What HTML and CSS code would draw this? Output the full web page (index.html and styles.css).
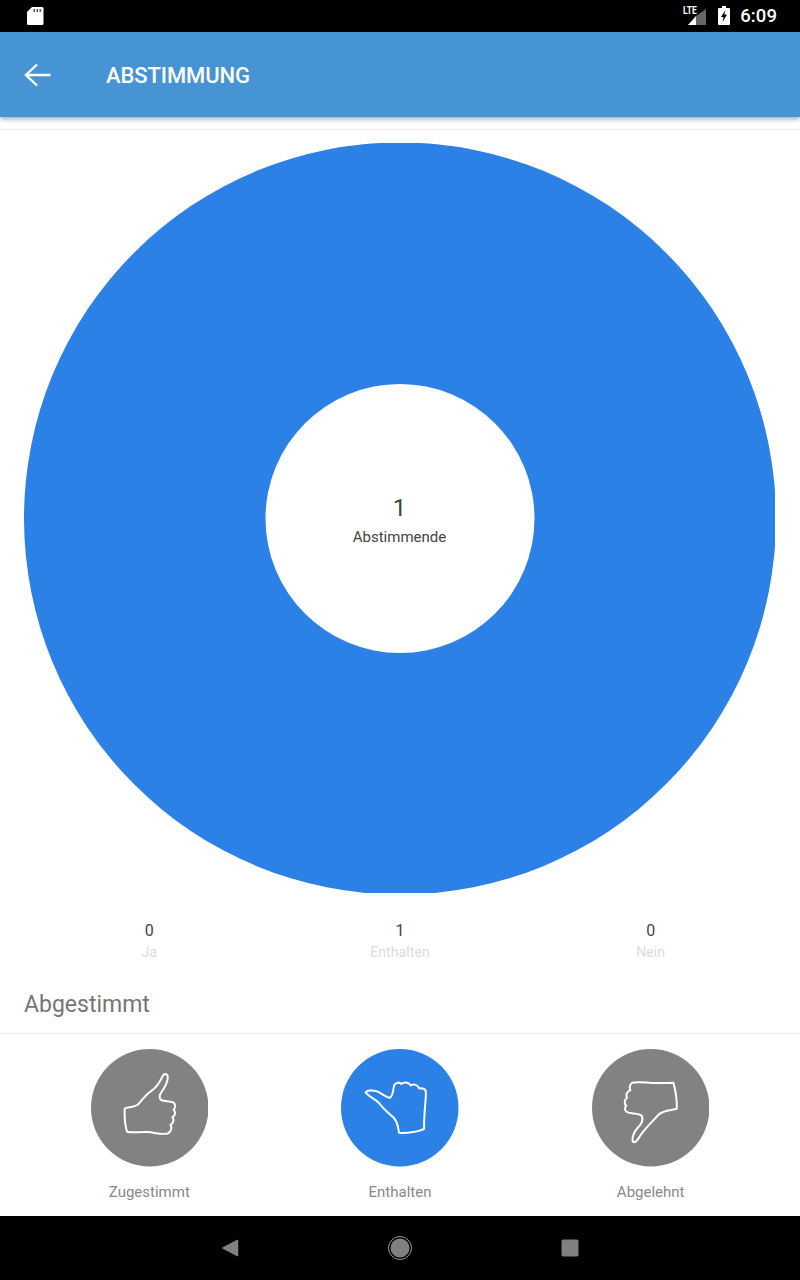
FILE: index.html
```html
<!DOCTYPE html>
<html lang="de">
<head>
<meta charset="utf-8">
<title>Abstimmung</title>
<link rel="stylesheet" href="styles.css">
</head>
<body>

<div class="statusbar">
  <svg class="sdcard" width="18" height="20" viewBox="0 0 18 20">
    <path d="M6 1h10a1.500 1.500 0 0 1 1.500 1.500v15a1.500 1.500 0 0 1-1.500 1.500H2.500A1.500 1.500 0 0 1 1 17.500V6z" fill="#fff"/>
    <path d="M7.500 3h1.500v3H7.500zM10.500 3H12v3h-1.500zM13.500 3H15v3h-1.500z" fill="#555"/>
  </svg>
  <div class="status-right">
    <svg class="signal" width="18" height="16" viewBox="0 0 18 16">
      <path d="M18 0v16H8V7.100z" fill="#666"/>
      <path d="M8 7.100V16H0z" fill="#fff"/>
    </svg>
    <span class="lte">LTE</span>
    <svg class="battery" width="12" height="19" viewBox="0 0 12 19">
      <path d="M4 0h4v2h3a1 1 0 0 1 1 1v15a1 1 0 0 1-1 1H1a1 1 0 0 1-1-1V3a1 1 0 0 1 1-1h3z" fill="#fff"/>
      <path d="M7.500 4 3 11h2.500L4.500 16 9 8.500H6.300z" fill="#000"/>
    </svg>
    <span class="clock">6:09</span>
  </div>
</div>

<div class="appbar">
  <svg class="back" width="27" height="26" viewBox="0 0 27 26">
    <path d="M26.500 13H3M13 2.500 2 13l11 10.500" fill="none" stroke="#fff" stroke-width="2.400"/>
  </svg>
  <span class="title">ABSTIMMUNG</span>
</div>

<div class="chart">
  <svg class="donut" width="751" height="750" viewBox="0 0 751 750">
    <circle cx="376" cy="375.500" r="376" fill="#2b81e5"/>
    <circle cx="376" cy="375.500" r="134.500" fill="#fff"/>
  </svg>
  <div class="chart-center">
    <div class="chart-num">1</div>
    <div class="chart-label">Abstimmende</div>
  </div>
</div>

<div class="stats">
  <div class="stat"><div class="stat-num">0</div><div class="stat-label">Ja</div></div>
  <div class="stat"><div class="stat-num">1</div><div class="stat-label">Enthalten</div></div>
  <div class="stat"><div class="stat-num">0</div><div class="stat-label">Nein</div></div>
</div>

<div class="heading">Abgestimmt</div>

<div class="votes">
  <div class="vote">
    <svg class="vote-icon" width="117.500" height="117.500" viewBox="32 26 352 352">
      <circle cx="208" cy="202" r="176" fill="#828282"/>
      <path class="hand" d="M133 205C136 199 160 202 172 193C184 181 196 162 212 152C228 142 240 122 248 105C252 99 262 100 262 110C263 124 250 146 240 160C235 170 238 178 246 180C258 183 276 182 281 188C285 194 285 203 279 208C286 213 286 224 276 231C281 237 280 248 270 253C275 260 273 272 264 278C250 285 225 276 200 275C180 274 155 278 140 274C134 255 132 225 133 205Z"/>
    </svg>
    <div class="vote-label">Zugestimmt</div>
  </div>
  <div class="vote">
    <svg class="vote-icon" width="117.500" height="117.500" viewBox="34 26 352 352">
      <circle cx="210" cy="202" r="176" fill="#2b81e5"/>
      <path class="hand" d="M108 157C110 149 130 149 142 153C155 159 170 172 180 172C188 170 190 155 192 140C194 127 208 123 215 131C222 124 236 124 243 135C252 130 264 133 268 144C277 143 288 144 288 154C290 175 282 210 283 265C270 272 235 279 208 277C205 262 204 245 192 232C175 216 160 205 150 190C138 176 118 170 108 157Z"/>
    </svg>
    <div class="vote-label">Enthalten</div>
  </div>
  <div class="vote">
    <svg class="vote-icon" width="117.500" height="117.500" viewBox="35 26 352 352">
      <circle cx="211" cy="202" r="176" fill="#828282"/>
      <path class="hand" d="M156 127C175 122 205 129 235 128C250 128 265 127 279 127C285 150 290 180 289 205C275 210 250 208 235 222C220 240 195 262 180 285C172 297 165 310 158 304C153 295 160 275 172 262C185 250 190 235 183 225C175 218 150 220 140 215C132 210 132 200 138 196C130 190 132 178 140 172C135 165 140 152 150 150C145 140 150 130 156 127Z"/>
    </svg>
    <div class="vote-label">Abgelehnt</div>
  </div>
</div>

<div class="navbar">
  <svg width="18" height="20" viewBox="0 0 18 20"><path d="M16.500 2.500v15L2 10z" fill="#808080" stroke="#808080" stroke-width="1.500" stroke-linejoin="round"/></svg>
  <svg width="26" height="26" viewBox="0 0 26 26"><circle cx="13" cy="13" r="11.500" fill="none" stroke="#999" stroke-width="1"/><circle cx="13" cy="13" r="9.500" fill="#808080"/></svg>
  <svg width="18" height="18" viewBox="0 0 18 18"><rect x="0.500" y="0.500" width="17" height="17" rx="2" fill="#808080"/></svg>
</div>

</body>
</html>
```

FILE: styles.css
```css
* {
  box-sizing: border-box;
}
html, body {
  margin: 0;
  padding: 0;
}
body {
  width: 800px;
  height: 1280px;
  overflow: hidden;
  background-color: #ffffff;
  font-family: Roboto, "Liberation Sans", sans-serif;
  display: flex;
  flex-direction: column;
}
.statusbar {
  height: 32px;
  background-color: #000000;
  display: flex;
  align-items: center;
  justify-content: space-between;
  padding-left: 26px;
  padding-right: 23px;
  flex-shrink: 0;
}
.sdcard {
  display: block;
}
.status-right {
  position: relative;
  display: flex;
  align-items: center;
  color: #ffffff;
}
.lte {
  position: absolute;
  left: -5px;
  top: 0;
  font-size: 10px;
  font-weight: 700;
  transform: scaleX(0.85);
  transform-origin: left top;
}
.signal {
  margin-top: 2px;
}
.battery {
  margin-left: 12px;
  margin-top: -1px;
}
.clock {
  margin-left: 10px;
  font-size: 18.500px;
  font-weight: 500;
  letter-spacing: 0.100px;
}
.appbar {
  height: 85px;
  background-color: #4694d4;
  box-shadow: 0 2px 5px rgba(0, 0, 0, 0.35);
  display: flex;
  align-items: center;
  padding-left: 24px;
  color: #ffffff;
  flex-shrink: 0;
}
.back {
  margin-right: 55px;
}
.title {
  font-size: 22px;
  font-weight: 500;
  letter-spacing: -0.100px;
  margin-top: 2px;
}
.chart {
  margin-top: 12px;
  border-top: 1px solid #eeeeee;
  height: 765px;
  padding-left: 24px;
  padding-top: 13px;
  display: grid;
  grid-template-columns: 751px;
  grid-template-rows: 750px;
  flex-shrink: 0;
}
.donut {
  grid-row: 1;
  grid-column: 1;
  display: block;
}
.chart-center {
  grid-row: 1;
  grid-column: 1;
  align-self: center;
  justify-self: center;
  text-align: center;
  color: #444444;
  margin-top: 8px;
}
.chart-num {
  font-size: 24px;
  line-height: 30px;
}
.chart-label {
  font-size: 15px;
  line-height: 28px;
}
.stats {
  display: grid;
  grid-template-columns: repeat(3, 1fr);
  padding: 0 24px;
  margin-top: 27px;
  text-align: center;
}
.stat-num {
  font-size: 16px;
  line-height: 20px;
  color: #444444;
}
.stat-label {
  font-size: 14.200px;
  line-height: 22px;
  color: #dddddd;
}
.heading {
  height: 71px;
  padding-left: 24px;
  padding-top: 27px;
  border-bottom: 1px solid #eeeeee;
  font-size: 23px;
  line-height: 30px;
  color: #757575;
}
.votes {
  display: grid;
  grid-template-columns: repeat(3, 1fr);
  padding: 15px 24px 0;
  flex-grow: 1;
  text-align: center;
}
.vote-icon {
  display: block;
  margin: 0 auto;
}
.hand {
  fill: none;
  stroke: #ffffff;
  stroke-width: 6;
  stroke-linejoin: round;
}
.vote-label {
  margin-top: 16px;
  font-size: 15px;
  line-height: 18px;
  color: #888888;
}
.navbar {
  height: 64px;
  background-color: #000000;
  display: flex;
  align-items: center;
  justify-content: center;
  flex-shrink: 0;
}
.navbar svg:nth-child(2) {
  margin: 0 148px;
}
```
